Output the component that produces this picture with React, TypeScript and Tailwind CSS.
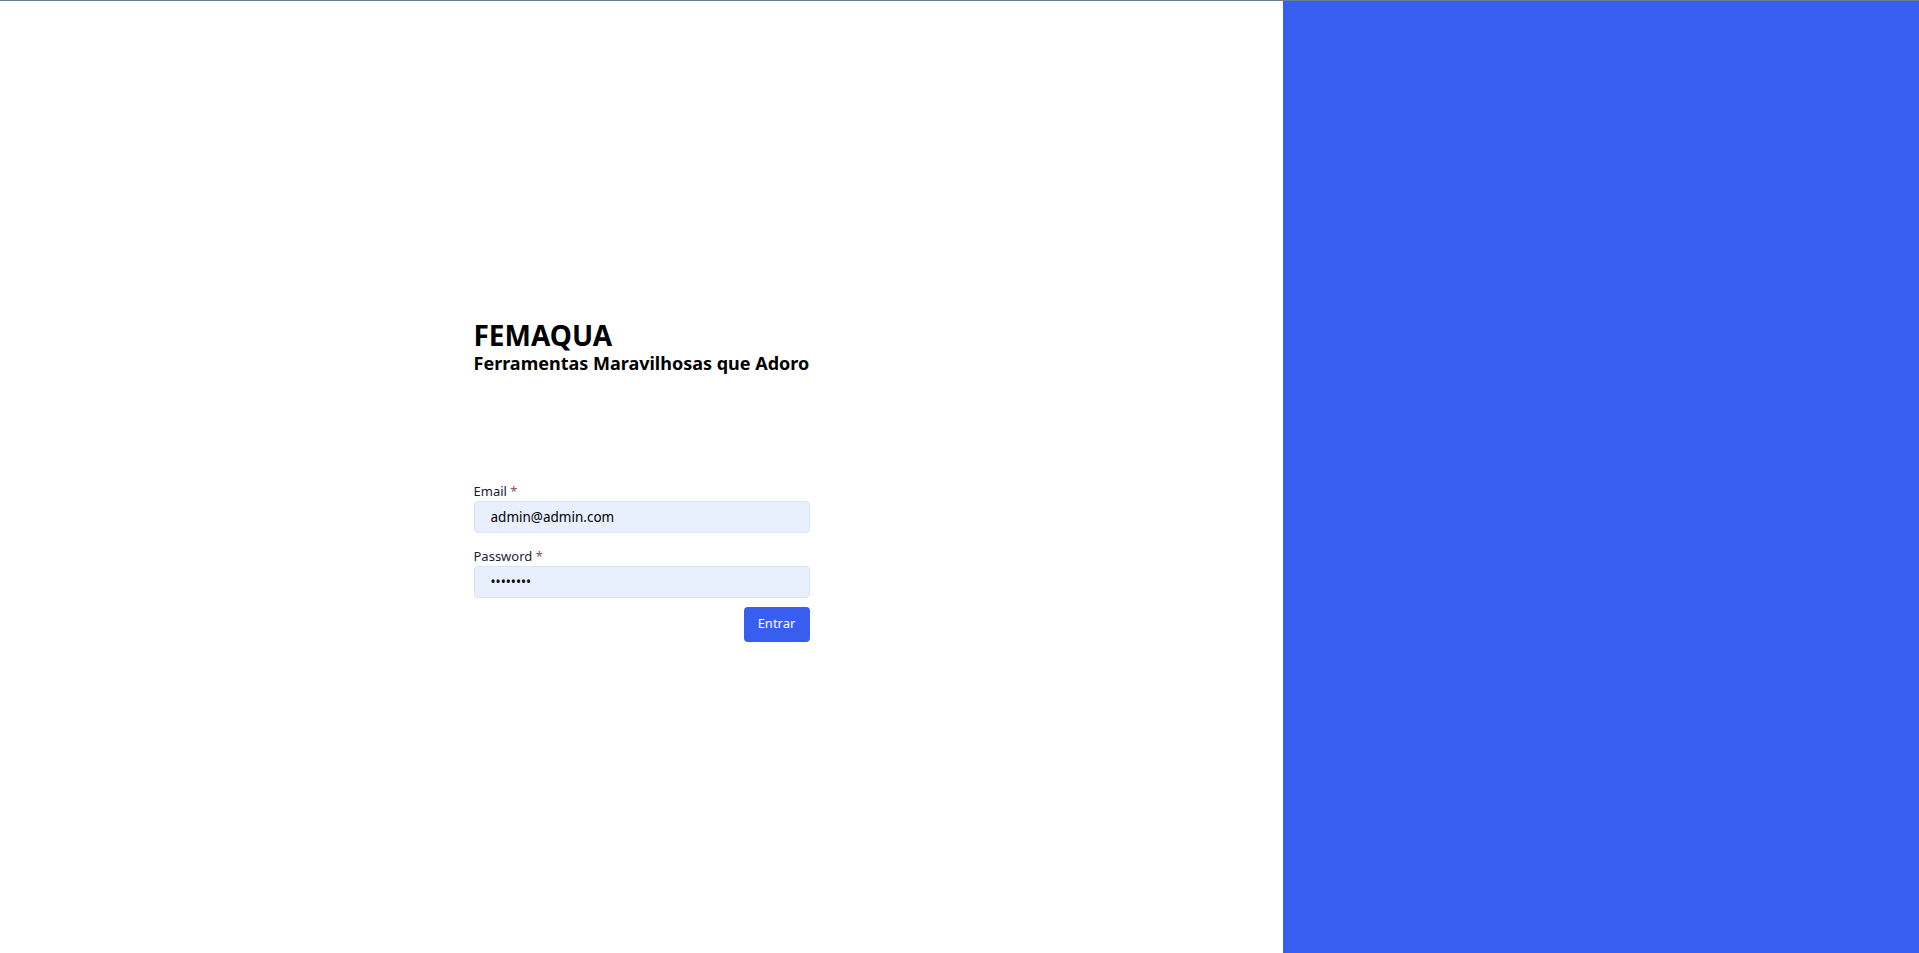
import { useState } from 'react'

export default function App() {
  const [email, setEmail] = useState('admin@admin.com')
  const [password, setPassword] = useState('12345678')

  return (
    <div className="flex h-[953px] w-full border-t border-[#6b7a90] font-['Noto_Sans',sans-serif] text-black">
      <div className="flex w-[1283px] items-center justify-center bg-white pt-[6px]">
        <div className="w-[336px]">
          <h1 className="text-[28px] font-bold leading-[32px]">FEMAQUA</h1>
          <h2 className="text-[18px] font-bold leading-[24px]">Ferramentas Maravilhosas que Adoro</h2>

          <form className="mt-[108px]" onSubmit={(e) => e.preventDefault()}>
            <label className="block text-[13px] leading-[17px] text-[#1b1a3a]">
              Email <span className="text-[#8a4a5a]">*</span>
            </label>
            <input
              type="email"
              value={email}
              onChange={(e) => setEmail(e.target.value)}
              className="mt-[1px] block h-[32px] w-full rounded-[4px] border border-[#dce3ee] bg-[#e8f0fe] px-[16px] text-[13.5px] text-black outline-none"
            />

            <label className="mt-[15px] block text-[13px] leading-[17px] text-[#1b1a3a]">
              Password <span className="text-[#8a4a5a]">*</span>
            </label>
            <input
              type="password"
              value={password}
              onChange={(e) => setPassword(e.target.value)}
              className="mt-[1px] block h-[32px] w-full rounded-[4px] border border-[#dce3ee] bg-[#e8f0fe] px-[16px] text-[13.5px] text-black outline-none"
            />

            <div className="mt-[9px] flex justify-end">
              <button
                type="submit"
                className="h-[35px] w-[66px] rounded-[4px] bg-[#385ef0] text-[13px] text-white"
              >
                Entrar
              </button>
            </div>
          </form>
        </div>
      </div>
      <div className="flex-1 bg-[#385ef0]" />
    </div>
  )
}
